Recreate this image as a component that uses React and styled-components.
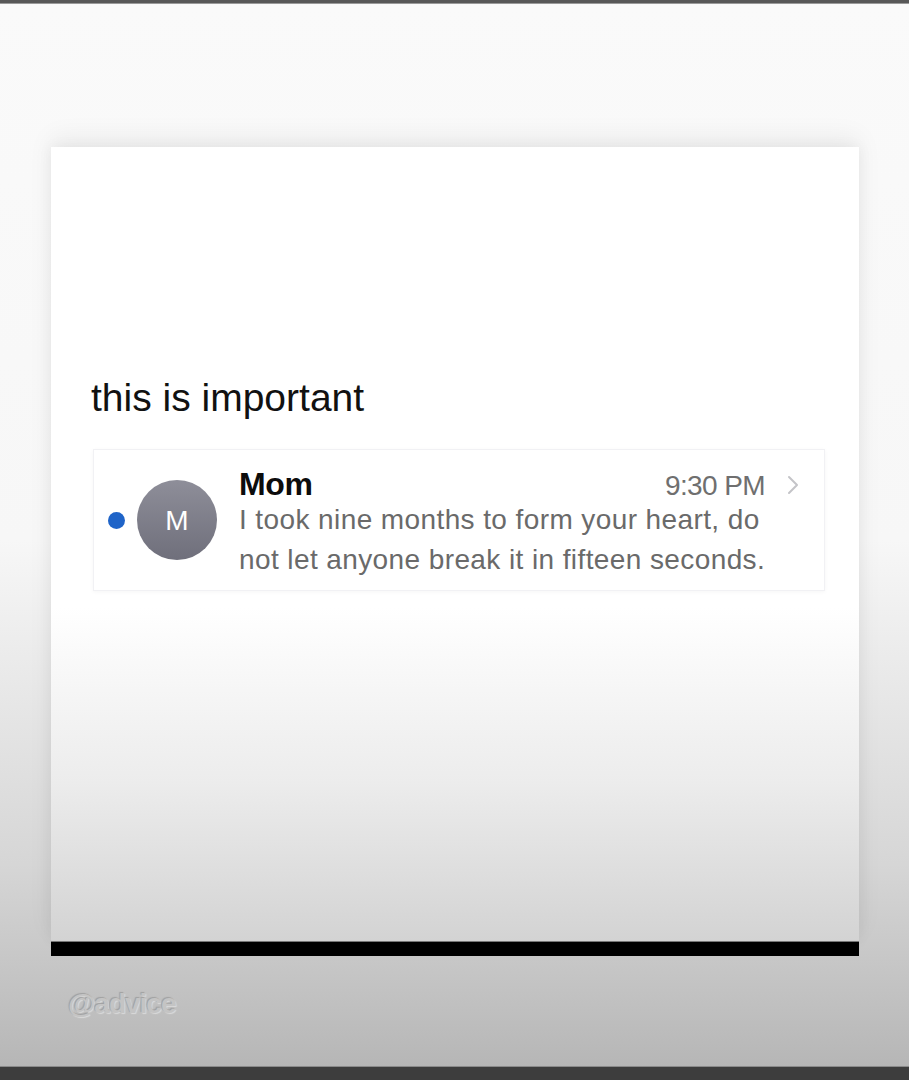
import styled, { createGlobalStyle } from 'styled-components';

const GlobalStyle = createGlobalStyle`
  html, body {
    margin: 0;
    padding: 0;
    background: #3d3d3d;
  }
  * {
    box-sizing: border-box;
  }
`;

export default function App() {
  return (
    <>
      <GlobalStyle />
      <Screen>
        <TopBar />
        <Stage>
          <Card>
            <Caption>this is important</Caption>
            <MessageRow>
              <UnreadDot />
              <Avatar>M</Avatar>
              <Body>
                <Header>
                  <Sender>Mom</Sender>
                  <Time>9:30 PM</Time>
                </Header>
                <Preview>
                  I took nine months to form your heart, do
                  <br />
                  not let anyone break it in fifteen seconds.
                </Preview>
              </Body>
              <Chevron viewBox="0 0 12 20">
                <path d="M2 2l8 8-8 8" />
              </Chevron>
            </MessageRow>
          </Card>
          <BlackBar />
          <Watermark>@advice</Watermark>
        </Stage>
        <BottomBar />
      </Screen>
    </>
  );
}

const Screen = styled.main`
  display: flex;
  flex-direction: column;
  width: 909px;
  height: 1080px;
  font-family: 'Liberation Sans', Arial, sans-serif;
  background: linear-gradient(
    to bottom,
    #fafafa 0%,
    #f7f7f7 50%,
    #d6d6d6 80%,
    #b4b4b4 100%
  );
`;

const TopBar = styled.div`
  height: 4px;
  background: #585858;
  border-bottom: 1px solid #9a9a9a;
`;

const Stage = styled.section`
  flex: 1;
  display: flex;
  flex-direction: column;
  padding: 143px 50px 0 51px;
`;

const Card = styled.div`
  height: 794px;
  display: flex;
  flex-direction: column;
  padding: 229px 34px 0 42px;
  background: linear-gradient(
    to bottom,
    #ffffff 0%,
    #ffffff 58%,
    #ececec 80%,
    #d3d3d3 100%
  );
  box-shadow: 0 -10px 24px rgba(0, 0, 0, 0.06), 0 0 14px rgba(0, 0, 0, 0.05);
`;

const Caption = styled.h1`
  margin: 0 0 29px -2px;
  font-family: 'Liberation Sans', Arial, sans-serif;
  font-weight: 400;
  font-size: 39px;
  letter-spacing: 0;
  line-height: 44px;
  color: #111;
`;

const MessageRow = styled.div`
  display: flex;
  align-items: center;
  height: 142px;
  padding: 0 25px 0 14px;
  border: 1px solid #f1f1f4;
  box-shadow: 0 1px 4px rgba(0, 0, 0, 0.04);
`;

const UnreadDot = styled.span`
  width: 17px;
  height: 17px;
  border-radius: 50%;
  background: #1f64c8;
  flex-shrink: 0;
`;

const Avatar = styled.div`
  width: 80px;
  height: 80px;
  margin-left: 12px;
  border-radius: 50%;
  flex-shrink: 0;
  display: flex;
  align-items: center;
  justify-content: center;
  background: linear-gradient(to bottom, #8e8e99, #6f6f7b);
  color: #fff;
  font-size: 28px;
  padding-top: 1px;
`;

const Body = styled.div`
  flex: 1;
  min-width: 0;
  margin: 6px 22px 0 22px;
`;

const Header = styled.div`
  display: flex;
  align-items: baseline;
  justify-content: space-between;
`;

const Sender = styled.span`
  font-weight: 700;
  font-size: 32px;
  letter-spacing: -0.3px;
  color: #0c0c0c;
`;

const Time = styled.span`
  font-size: 28px;
  letter-spacing: -0.6px;
  color: #6f6f6f;
`;

const Chevron = styled.svg`
  align-self: flex-start;
  width: 12px;
  height: 20px;
  margin-top: 25px;
  flex-shrink: 0;
  fill: none;
  stroke: #c4c4c8;
  stroke-width: 2;
  stroke-linecap: round;
  stroke-linejoin: round;
`;

const Preview = styled.p`
  margin: -3px 0 0;
  white-space: nowrap;
  font-size: 28px;
  line-height: 40px;
  letter-spacing: 0.4px;
  color: #6a6a6a;
`;

const BlackBar = styled.div`
  height: 15px;
  background: #000;
  border-top: 1px solid #777;
`;

const Watermark = styled.div`
  margin: 32px 0 0 17px;
  font-size: 28px;
  font-weight: 700;
  letter-spacing: -1px;
  color: #c4c4c4;
  text-shadow: -1px -1px 1px #a0a0a0, 1px 1px 1px #dadada;
`;

const BottomBar = styled.div`
  height: 14px;
  background: #3d3d3d;
  border-top: 1px solid #8a8a8a;
`;
